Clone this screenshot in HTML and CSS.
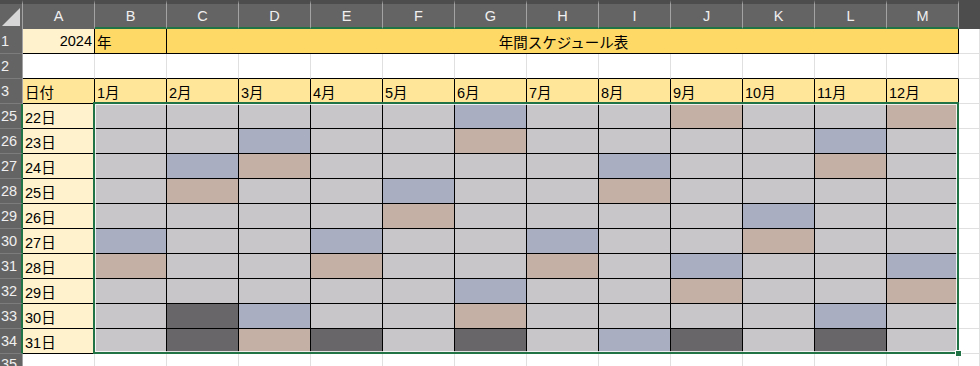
FILE: index.html
```html
<!DOCTYPE html>
<html lang="ja">
<head>
    <meta charset="UTF-8">
    <meta name="viewport" content="width=device-width, initial-scale=1.0">
    <title>年間スケジュール表</title>
    <link rel="stylesheet" href="styles.css">
</head>
<body>
    <div class="sheet">
        <!-- 列見出し -->
        <div class="corner"><span class="corner-tri"></span></div>
        <div class="col-head">A</div>
        <div class="col-head sel">B</div>
        <div class="col-head sel">C</div>
        <div class="col-head sel">D</div>
        <div class="col-head sel">E</div>
        <div class="col-head sel">F</div>
        <div class="col-head sel">G</div>
        <div class="col-head sel">H</div>
        <div class="col-head sel">I</div>
        <div class="col-head sel">J</div>
        <div class="col-head sel">K</div>
        <div class="col-head sel">L</div>
        <div class="col-head sel">M</div>
        <div class="col-head rest"></div>

        <!-- 1行目 -->
        <div class="row-head">1</div>
        <div class="cell year b">2024</div>
        <div class="cell gold b">年</div>
        <div class="cell gold b title">年間スケジュール表</div>
        <div class="cell"></div>

        <!-- 2行目 -->
        <div class="row-head">2</div>
        <div class="cell above"></div>
        <div class="cell above"></div>
        <div class="cell above"></div>
        <div class="cell above"></div>
        <div class="cell above"></div>
        <div class="cell above"></div>
        <div class="cell above"></div>
        <div class="cell above"></div>
        <div class="cell above"></div>
        <div class="cell above"></div>
        <div class="cell above"></div>
        <div class="cell above"></div>
        <div class="cell above"></div>
        <div class="cell"></div>

        <!-- 3行目 -->
        <div class="row-head">3</div>
        <div class="cell month b">日付</div>
        <div class="cell month b">1月</div>
        <div class="cell month b">2月</div>
        <div class="cell month b">3月</div>
        <div class="cell month b">4月</div>
        <div class="cell month b">5月</div>
        <div class="cell month b">6月</div>
        <div class="cell month b">7月</div>
        <div class="cell month b">8月</div>
        <div class="cell month b">9月</div>
        <div class="cell month b">10月</div>
        <div class="cell month b">11月</div>
        <div class="cell month b">12月</div>
        <div class="cell"></div>

        <!-- 25〜34行目 -->
        <div class="days" id="days"></div>

        <!-- 35行目 -->
        <div class="row-head last">35</div>
        <div class="cell"></div>
        <div class="cell"></div>
        <div class="cell"></div>
        <div class="cell"></div>
        <div class="cell"></div>
        <div class="cell"></div>
        <div class="cell"></div>
        <div class="cell"></div>
        <div class="cell"></div>
        <div class="cell"></div>
        <div class="cell"></div>
        <div class="cell"></div>
        <div class="cell"></div>
        <div class="cell"></div>

        <div class="selection"><span class="handle"></span></div>
    </div>

    <script>
        // g=グレー, b=青, r=茶, d=濃いグレー
        const schedule = [
            'gggggbggrggr',
            'ggbggrggggbg',
            'gbrggggbggrg',
            'grggbggrgggg',
            'ggggrggggbgg',
            'bggbggbggrgg',
            'rggrggrgbggb',
            'gggggbggrggr',
            'gdbggrggggbg',
            'gdrdgdgbdgdg'
        ];
        const shades = { g: 'gray', b: 'blue', r: 'tan', d: 'dark' };

        function buildDays() {
            const days = document.getElementById('days');

            schedule.forEach((pattern, i) => {
                const head = document.createElement('div');
                head.className = 'row-head sel';
                head.textContent = 25 + i;
                days.appendChild(head);

                const date = document.createElement('div');
                date.className = 'cell date b';
                date.textContent = (22 + i) + '日';
                days.appendChild(date);

                for (const ch of pattern) {
                    const cell = document.createElement('div');
                    cell.className = 'cell b ' + shades[ch];
                    days.appendChild(cell);
                }

                days.appendChild(Object.assign(document.createElement('div'), { className: 'cell' }));
            });
        }

        buildDays();
    </script>
</body>
</html>
```

FILE: styles.css
```css
:root {
    --head-bg: #656465;
    --head-dark: #4e4d4e;
    --head-line: #a3a3a3;
    --head-text: #f0f0f0;
    --grid-line: #e0e0e0;
    --select: #217346;
}

* {
    margin: 0;
    padding: 0;
    box-sizing: border-box;
}

body {
    background: #ffffff;
    overflow: hidden;
    font-family: "Liberation Sans", "Noto Sans CJK JP", sans-serif;
}

.sheet {
    position: relative;
    display: grid;
    grid-template-columns: 23px repeat(13, 72px) 1fr;
    grid-template-rows: 29px repeat(13, 25px) 1fr;
    width: 980px;
    height: 366px;
}

.days {
    display: contents;
}

/* 見出し */
.corner {
    background: var(--head-bg);
    border-top: 4px solid var(--head-dark);
    border-right: 1px solid var(--head-line);
    display: flex;
    justify-content: flex-end;
    align-items: flex-end;
    padding: 0 2px 3px 0;
}

.corner-tri {
    width: 0;
    height: 0;
    border-left: 18px solid transparent;
    border-bottom: 18px solid #d6d6d6;
}

.col-head {
    background: var(--head-bg);
    border-top: 4px solid var(--head-dark);
    border-right: 1px solid var(--head-line);
    border-bottom: 2px solid var(--head-bg);
    color: var(--head-text);
    font-size: 14.5px;
    display: flex;
    justify-content: center;
    align-items: center;
}

.col-head.sel {
    border-bottom-color: var(--select);
}

.col-head.rest {
    background: var(--head-dark);
    border: none;
}

.row-head {
    background: var(--head-bg);
    border-right: 1px solid var(--head-line);
    border-bottom: 1px solid #7d7c7d;
    color: var(--head-text);
    font-size: 14.5px;
    display: flex;
    align-items: center;
    padding-left: 1px;
}

.row-head.sel {
    border-right: 2px solid var(--select);
}

.row-head.last {
    align-items: flex-start;
    padding-top: 2px;
    border-bottom: none;
}

/* セル */
.cell {
    border-right: 1px solid var(--grid-line);
    border-bottom: 1px solid var(--grid-line);
    font-size: 14.5px;
    color: #000000;
    display: flex;
    align-items: center;
    padding-left: 2px;
    white-space: nowrap;
}

.cell.b {
    border-color: #000000;
}

.cell.above {
    border-bottom-color: #000000;
}

.year {
    background: #fff2cc;
    justify-content: flex-end;
    padding-right: 2px;
}

.gold {
    background: #ffd966;
}

.title {
    grid-column: span 11;
    justify-content: center;
}

.month {
    background: #ffe699;
}

.date {
    background: #fff2cc;
}

.gray {
    background: #c8c6c9;
}

.blue {
    background: #a9aec1;
}

.tan {
    background: #c5b0a6;
}

.dark {
    background: #686669;
}

/* 選択範囲 */
.selection {
    position: absolute;
    left: 93px;
    top: 102px;
    width: 866px;
    height: 252px;
    border: 2px solid var(--select);
    box-shadow: inset 0 0 0 1px rgba(255, 255, 255, 0.8);
    pointer-events: none;
}

.handle {
    position: absolute;
    right: -5px;
    bottom: -5px;
    width: 7px;
    height: 7px;
    background: var(--select);
    border: 1px solid #ffffff;
}
```
